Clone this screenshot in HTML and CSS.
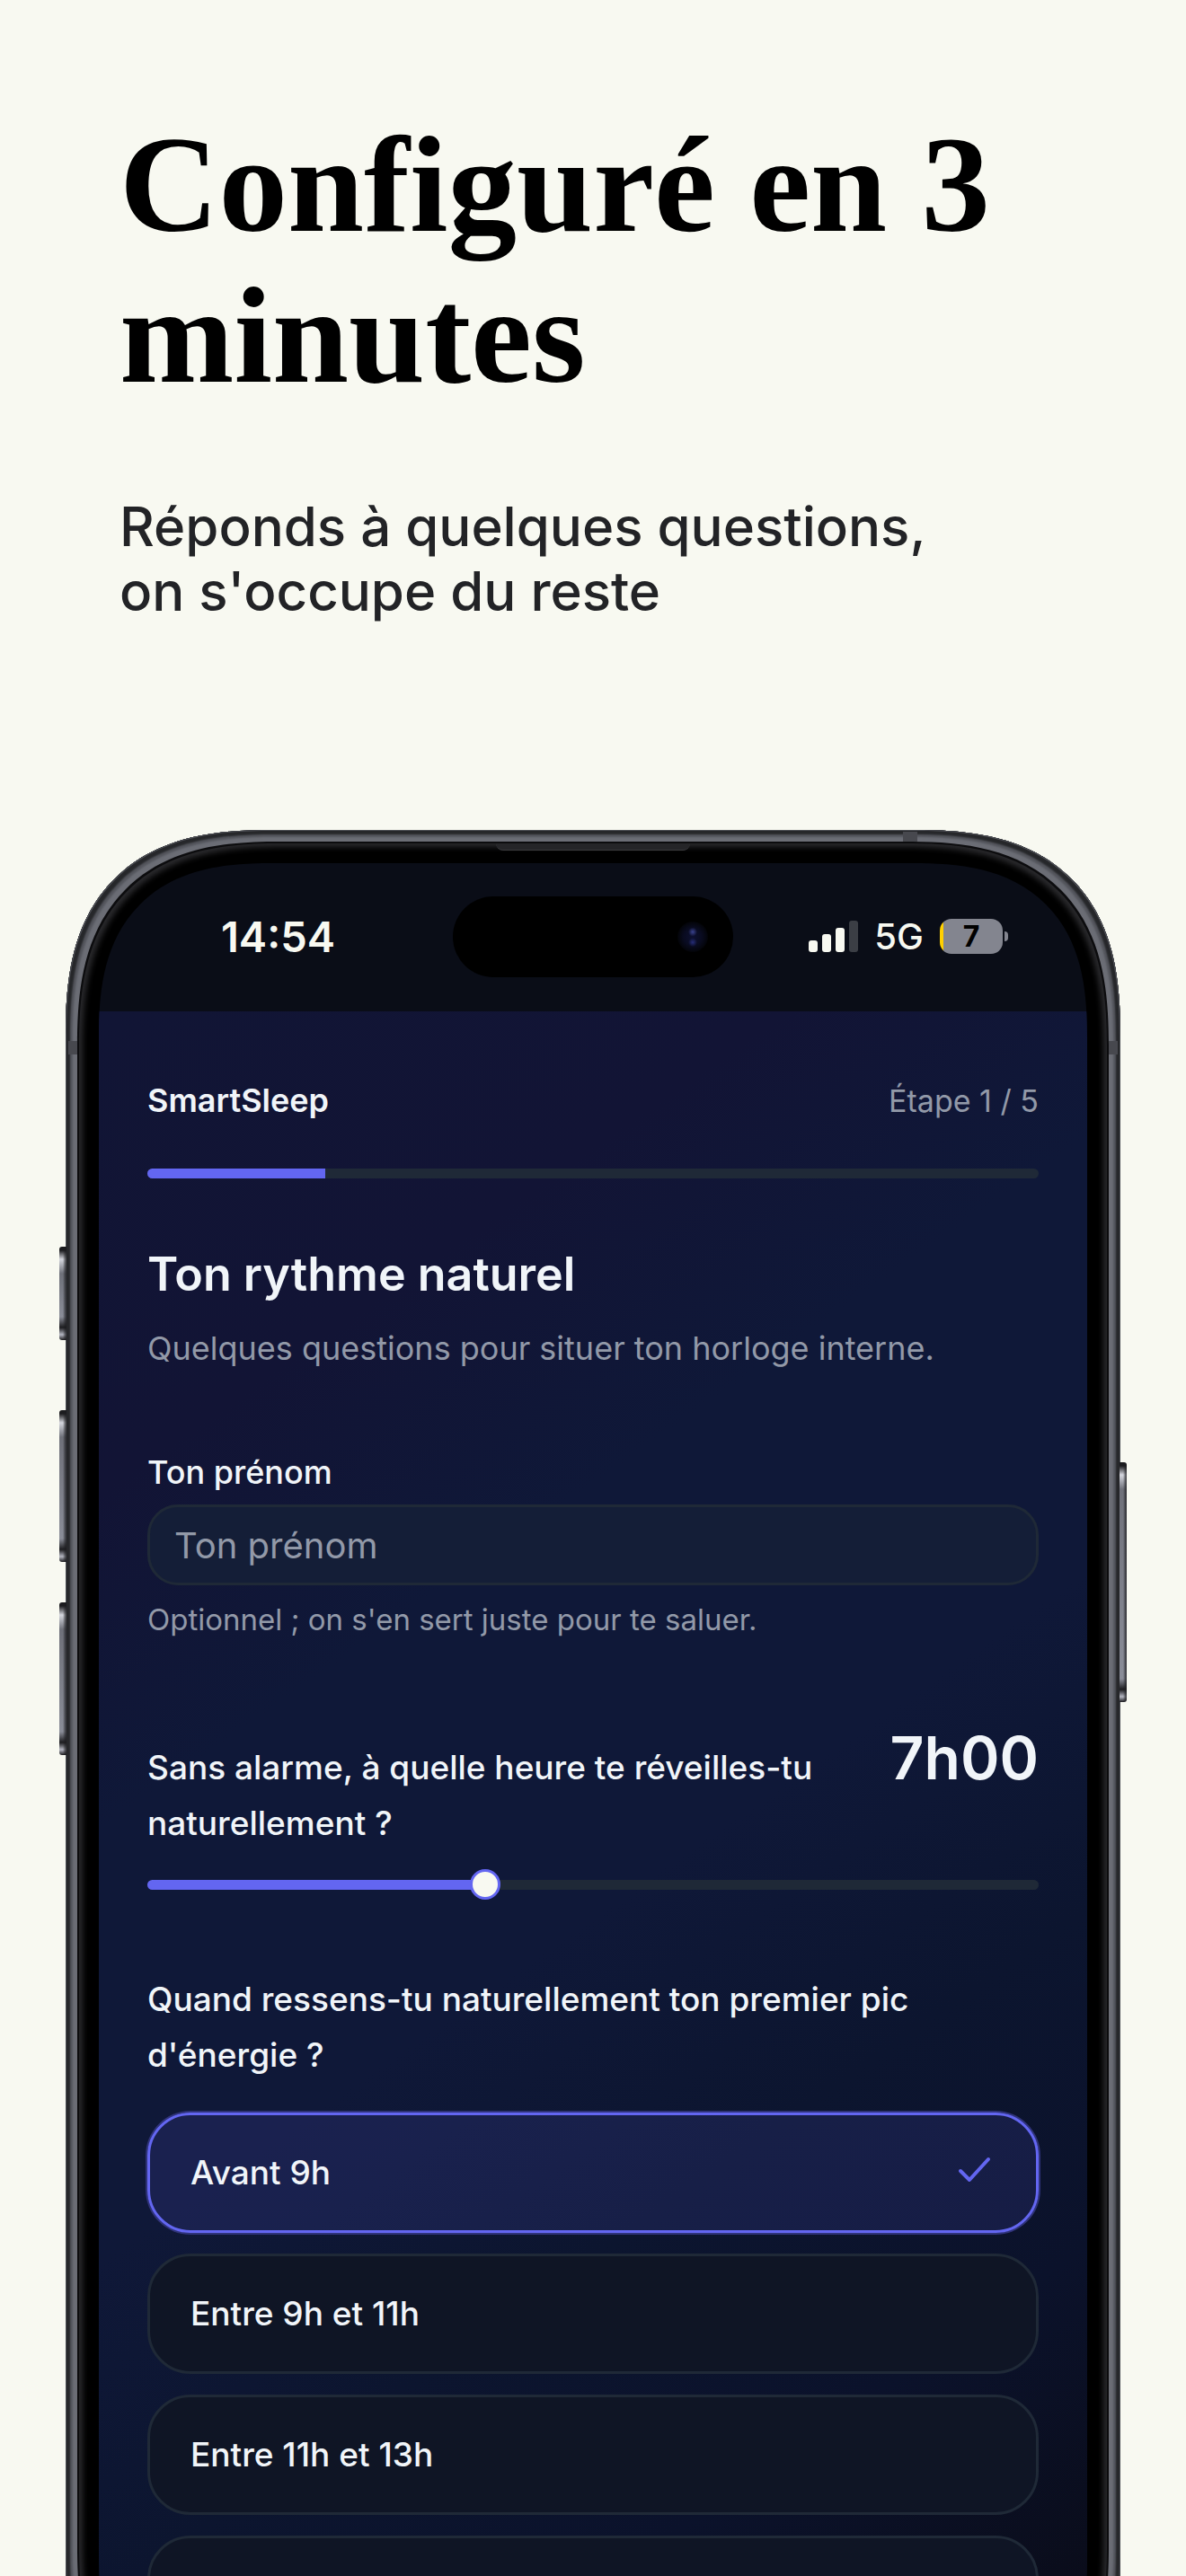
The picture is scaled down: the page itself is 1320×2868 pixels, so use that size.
FILE: index.html
```html
<!DOCTYPE html>
<html lang="fr">

<head>
    <meta charset="UTF-8">
    <meta name="viewport" content="width=device-width, initial-scale=1.0">
    <title>SmartSleep - Configuré en 3 minutes</title>
    <link rel="stylesheet" href="styles.css">
</head>

<body>
    <div class="page">
        <header class="intro">
            <h1>Configuré en 3 minutes</h1>
            <p>Réponds à quelques questions,<br>on s'occupe du reste</p>
        </header>

        <div class="phone">
            <!-- Side buttons and antenna bands -->
            <span class="side-button action"></span>
            <span class="side-button volume-up"></span>
            <span class="side-button volume-down"></span>
            <span class="side-button power"></span>
            <span class="band band-top"></span>
            <span class="band band-left"></span>
            <span class="band band-right"></span>
            <span class="speaker"></span>

            <div class="screen">
                <div class="status-bar">
                    <span class="clock">14:54</span>
                    <div class="island"><span class="camera"></span></div>
                    <div class="status-icons">
                        <svg class="signal" viewBox="0 0 55 36" aria-hidden="true">
                            <rect x="0" y="22" width="10" height="13" rx="3" />
                            <rect x="15" y="15" width="10" height="20" rx="3" />
                            <rect x="30" y="8" width="10" height="27" rx="3" />
                            <rect class="off" x="45" y="0" width="10" height="35" rx="3" />
                        </svg>
                        <span class="network">5G</span>
                        <div class="battery"><span>7</span></div>
                    </div>
                </div>

                <main class="app">
                    <div class="app-header">
                        <span class="brand">SmartSleep</span>
                        <span class="step">Étape 1 / 5</span>
                    </div>
                    <progress class="progress" value="1" max="5" aria-label="Étape 1 sur 5"></progress>

                    <h2>Ton rythme naturel</h2>
                    <p class="lead">Quelques questions pour situer ton horloge interne.</p>

                    <form class="form">
                        <div class="field">
                            <label class="field-name" for="prenom">Ton prénom</label>
                            <input class="text-input" type="text" id="prenom" placeholder="Ton prénom">
                            <p class="hint">Optionnel ; on s'en sert juste pour te saluer.</p>
                        </div>

                        <div class="field">
                            <div class="slider-head">
                                <label for="reveil">Sans alarme, à quelle heure te réveilles-tu naturellement ?</label>
                                <output for="reveil">7h00</output>
                            </div>
                            <input class="slider" type="range" id="reveil" min="4" max="12" step="0.25" value="7">
                        </div>

                        <fieldset class="field">
                            <legend>Quand ressens-tu naturellement ton premier pic d'énergie ?</legend>
                            <div class="options">
                                <label class="option">
                                    <input type="radio" name="pic" checked>
                                    <span>Avant 9h</span>
                                    <svg class="check" viewBox="0 0 24 24" aria-hidden="true">
                                        <path d="M20 4.500 9.500 16l-5-5" />
                                    </svg>
                                </label>
                                <label class="option">
                                    <input type="radio" name="pic">
                                    <span>Entre 9h et 11h</span>
                                </label>
                                <label class="option">
                                    <input type="radio" name="pic">
                                    <span>Entre 11h et 13h</span>
                                </label>
                                <label class="option">
                                    <input type="radio" name="pic" aria-label="Après 13h">
                                </label>
                            </div>
                        </fieldset>
                    </form>
                </main>
            </div>
        </div>
    </div>
</body>

</html>
```
FILE: styles.css
```css
* {
    box-sizing: border-box;
}

body {
    margin: 0;
    background-color: #f8f9f1;
    font-family: Inter, "Liberation Sans", sans-serif;
}

h1,
h2,
p {
    margin: 0;
}

.page {
    height: 100vh;
    overflow: hidden;
    padding: 122px 73px 0;
}

/* Headline */
.intro {
    padding: 0 60px;
    margin-bottom: 230px;
}

.intro h1 {
    font-family: "Liberation Serif", serif;
    font-size: 153px;
    line-height: 168px;
    font-weight: bold;
    color: #000;
}

.intro p {
    margin-top: 92px;
    font-size: 60px;
    line-height: 72px;
    font-weight: 500;
    color: #222326;
}

/* Phone */
.phone {
    position: relative;
    padding: 37px;
    background-color: #000;
    border-radius: 190px;
    box-shadow:
        inset 0 0 0 1px #4d4f55,
        inset 0 0 2px 5px #26272a,
        inset 0 0 2px 8px #55575e,
        inset 0 0 0 13px #6b6d75,
        inset 0 0 0 15px #0c0c0e,
        inset 0 0 6px 19px #2a2a2d;
}

.screen {
    overflow: hidden;
    border-radius: 154px;
    background-color: #0a0d17;
}

/* Continuous corners where the browser has them */
@supports (corner-shape: superellipse(1.36)) {
    .phone {
        border-radius: 230px;
        corner-shape: superellipse(1.36);
    }

    .screen {
        border-radius: 194px;
        corner-shape: superellipse(1.36);
    }
}

.side-button {
    position: absolute;
    left: -7px;
    width: 8px;
    border-radius: 3px 0 0 3px;
    background:
        linear-gradient(to right, transparent 4px, rgba(28, 28, 31, 0.7) 7px),
        linear-gradient(#1c1c1f 4px, #d5d7de 14px, #6f717a 30px, #8a8d98 calc(100% - 26px), #1c1c1f calc(100% - 14px), #b5b7c2 calc(100% - 6px), #1c1c1f);
}

.action {
    top: 464px;
    height: 104px;
}

.volume-up {
    top: 646px;
    height: 169px;
}

.volume-down {
    top: 860px;
    height: 170px;
}

.power {
    top: 704px;
    left: auto;
    right: -7px;
    height: 267px;
    border-radius: 0 3px 3px 0;
}

.band {
    position: absolute;
    background-color: #47484e;
}

.band-top {
    top: 2px;
    right: 226px;
    width: 16px;
    height: 11px;
}

.band-left,
.band-right {
    top: 235px;
    width: 10px;
    height: 15px;
}

.band-left {
    left: 3px;
}

.band-right {
    right: 3px;
}

.speaker {
    position: absolute;
    top: 15px;
    left: 50%;
    width: 216px;
    height: 8px;
    margin-left: -108px;
    border-radius: 0 0 8px 8px;
    background-color: #252528;
    border-bottom: 1px solid #3a3a3d;
}

/* Status bar */
.status-bar {
    display: grid;
    grid-template-columns: 1fr 312px 1fr;
    align-items: center;
    height: 165px;
    padding: 0 94px 2px;
    color: #f8f9f1;
}

.clock {
    padding-left: 42px;
    font-size: 47px;
    font-weight: 600;
}

.island {
    display: flex;
    align-items: center;
    justify-content: flex-end;
    height: 90px;
    padding-right: 28px;
    border-radius: 45px;
    background-color: #000;
}

.camera {
    width: 34px;
    height: 34px;
    border-radius: 50%;
    background:
        radial-gradient(circle at 50% 34%, #3b4390 0, transparent 5px),
        radial-gradient(circle at 50% 68%, #262d78 0, transparent 5px),
        radial-gradient(circle, #0d1030 0, #090b20 10px, #030408 17px);
}

.status-icons {
    display: flex;
    align-items: center;
    justify-content: flex-end;
    gap: 18px;
}

.signal {
    width: 55px;
    height: 36px;
    fill: #f8f9f1;
}

.signal .off {
    fill: #3b3e45;
}

.network {
    font-size: 40px;
    font-weight: 500;
}

.battery {
    position: relative;
    width: 70px;
    height: 39px;
    border-radius: 13px;
    background: linear-gradient(to right, #ffd000 4px, #83858f 4px);
    color: #000;
    font-size: 32px;
    line-height: 39px;
    font-weight: 700;
    text-align: center;
}

.battery::after {
    content: "";
    position: absolute;
    top: 14px;
    right: -6px;
    width: 4px;
    height: 11px;
    border-radius: 0 4px 4px 0;
    background-color: #83858f;
}

/* App */
.app {
    padding: 70px 54px 80px;
    background: linear-gradient(145deg, #111535 0%, #121435 20%, #0f1838 34%, #0f1838 52%, #0c152f 66%, #0b122b 80%, #0a0c19 95%);
    color: #f1f5f9;
}

.app-header {
    display: flex;
    justify-content: space-between;
    align-items: baseline;
    line-height: 58px;
}

.brand {
    font-size: 36px;
    font-weight: 600;
}

.step {
    font-size: 34px;
    color: #9299a8;
}

.progress {
    display: block;
    width: 100%;
    height: 11px;
    margin-top: 46px;
    border-radius: 6px;
    overflow: hidden;
    appearance: none;
    -webkit-appearance: none;
}

.progress::-webkit-progress-bar {
    background-color: #1f2937;
}

.progress::-webkit-progress-value {
    background-color: #6366f1;
}

.app h2 {
    margin-top: 71px;
    font-size: 52px;
    line-height: 72px;
    font-weight: 600;
}

.lead {
    margin-top: 15px;
    font-size: 36px;
    line-height: 62px;
    color: #9299a8;
}

.form {
    display: flex;
    flex-direction: column;
    gap: 77px;
    margin-top: 76px;
}

.field {
    display: flex;
    flex-direction: column;
    min-width: 0;
    margin: 0;
    padding: 0;
    border: none;
    font-size: 37px;
    line-height: 62px;
    font-weight: 500;
}

.field-name {
    font-size: 36px;
}

.text-input {
    width: 100%;
    height: 90px;
    margin: 5px 0 11px;
    padding: 0 27px;
    border: 3px solid #1f2937;
    border-radius: 34px;
    background-color: #141e37;
    color: #f1f5f9;
    font-family: inherit;
    font-size: 40px;
}

.text-input::placeholder {
    color: #9299a8;
    opacity: 1;
}

.hint {
    font-size: 33px;
    line-height: 54px;
    font-weight: 400;
    color: #9299a8;
}

.slider-head {
    display: flex;
    justify-content: space-between;
    align-items: baseline;
    gap: 40px;
}

.slider-head output {
    font-size: 66px;
    line-height: 100px;
    font-weight: 600;
}

.slider {
    width: 100%;
    height: 34px;
    margin: 20px 0 3px;
    background: none;
    appearance: none;
    -webkit-appearance: none;
}

.slider::-webkit-slider-runnable-track {
    height: 11px;
    border-radius: 6px;
    background: linear-gradient(to right, #6366f1 38%, #1f2937 38%);
}

.slider::-webkit-slider-thumb {
    width: 34px;
    height: 34px;
    margin-top: -12px;
    border: 3px solid #6366f1;
    border-radius: 50%;
    background-color: #f8f9f1;
    -webkit-appearance: none;
}

legend {
    padding: 0;
}

.options {
    display: flex;
    flex-direction: column;
    gap: 23px;
    margin-top: 33px;
}

.option {
    display: flex;
    align-items: center;
    justify-content: space-between;
    height: 134px;
    padding: 0 45px;
    border: 3px solid #1f2937;
    border-radius: 48px;
    background-color: #0f1525;
}

.option input {
    position: absolute;
    opacity: 0;
}

.option:has(input:checked) {
    border-color: #6366f1;
    background-color: rgba(99, 102, 241, 0.13);
    box-shadow: 0 0 0 2px #2f3379;
}

.check {
    width: 48px;
    height: 48px;
    fill: none;
    stroke: #6366f1;
    stroke-width: 2;
    stroke-linecap: round;
    stroke-linejoin: round;
}
```
